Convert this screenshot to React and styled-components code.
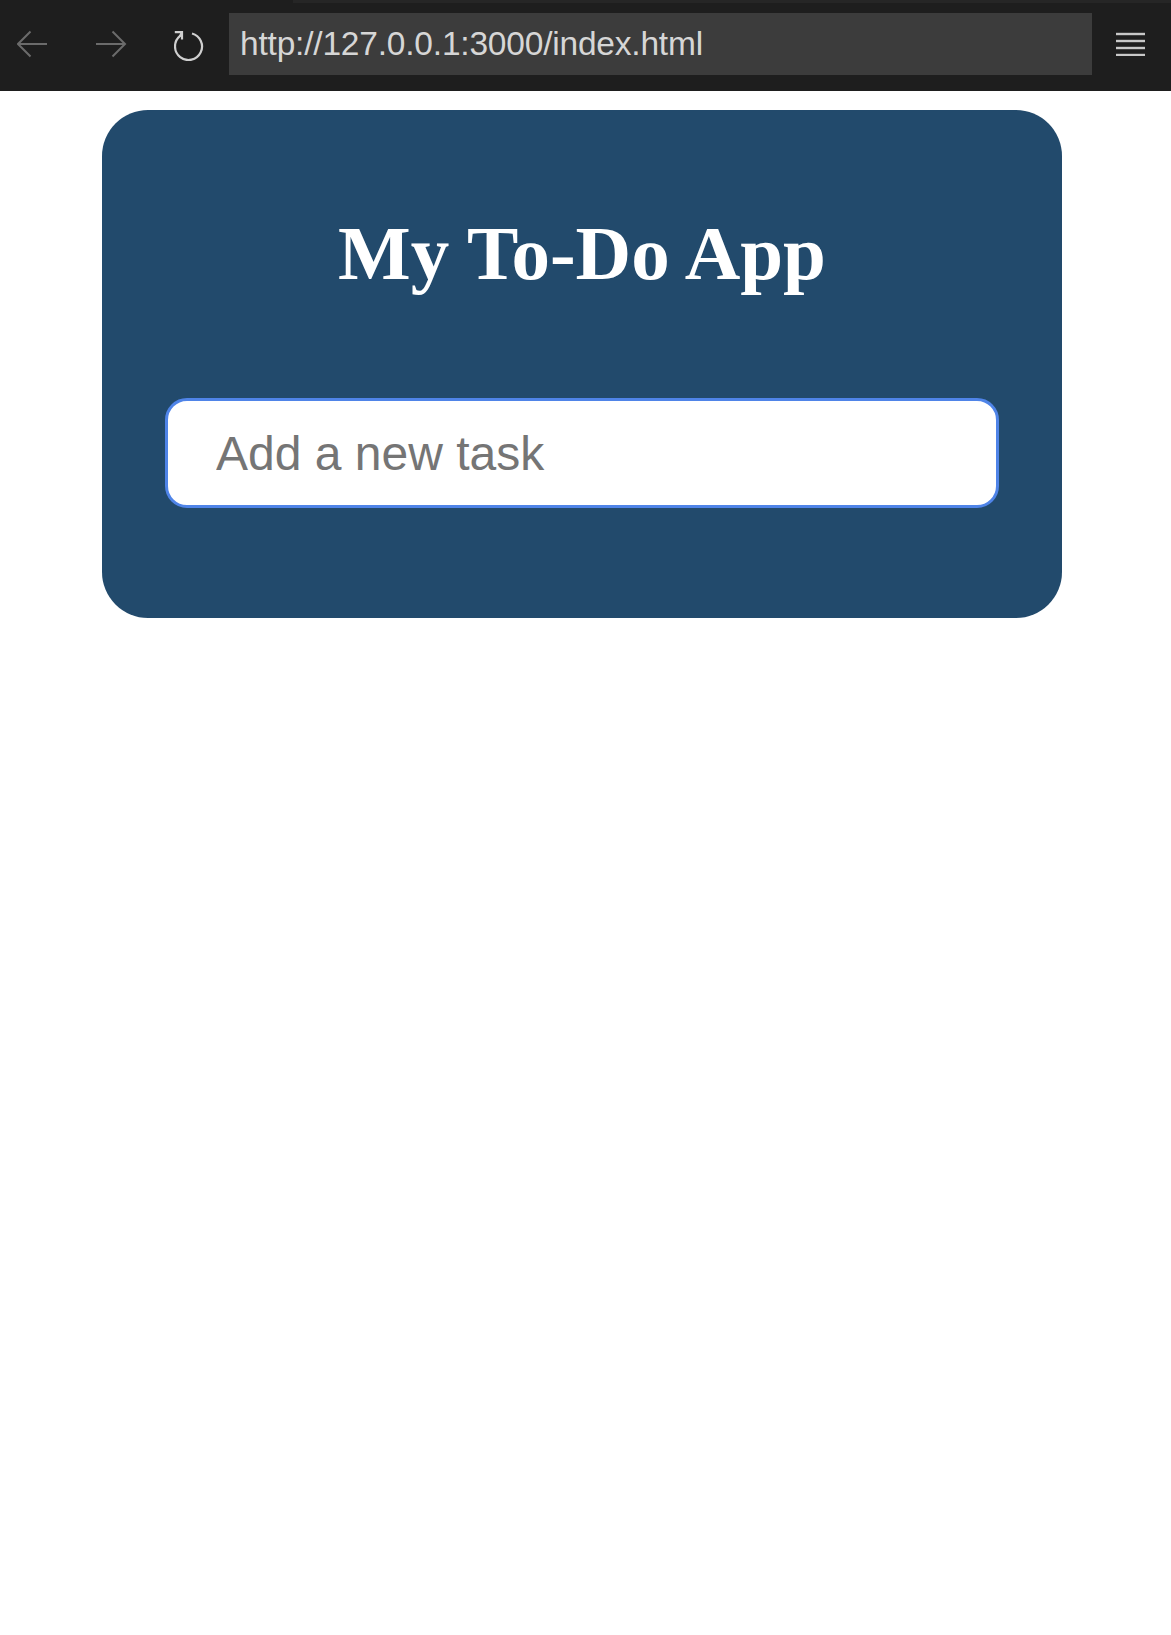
import React from 'react';
import styled, { createGlobalStyle } from 'styled-components';

const GlobalStyle = createGlobalStyle`
  body {
    margin: 0;
    background: #ffffff;
    font-family: "Liberation Sans", Arial, sans-serif;
  }
`;

const Toolbar = styled.header`
  height: 91px;
  display: flex;
  align-items: center;
  padding-left: 17px;
  box-sizing: border-box;
  background:
    linear-gradient(#262626, #262626) 293px 0 / 100% 3px no-repeat,
    #1e1e1e;
`;

const ToolIcon = styled.svg`
  flex: none;
  display: block;
  margin-right: ${props => props.$mr}px;
  margin-top: ${props => props.$mt || 0}px;
`;

const UrlField = styled.div`
  flex: none;
  width: 863px;
  height: 62px;
  margin: -3px 24px 0 0;
  padding-left: 11px;
  box-sizing: border-box;
  display: flex;
  align-items: center;
  background: #3c3c3c;
  color: #d6d6d6;
  font-size: 33.5px;
  letter-spacing: -0.2px;
`;

const Main = styled.main`
  padding: 19px 0 0 102px;
`;

const Card = styled.section`
  width: 960px;
  box-sizing: border-box;
  padding: 100px 63px 110px;
  border-radius: 46px;
  background: #224a6c;
`;

const Title = styled.h1`
  margin: 0 0 102px;
  text-align: center;
  color: #ffffff;
  font-family: "Liberation Serif", "Times New Roman", serif;
  font-weight: 700;
  font-size: 77px;
  line-height: 86px;
`;

const TaskInput = styled.input`
  display: block;
  width: 100%;
  height: 110px;
  box-sizing: border-box;
  margin: 0;
  padding: 0 48px;
  border: 3px solid #4f84e8;
  border-radius: 22px;
  outline: none;
  background: #ffffff;
  color: #222;
  font-family: "Liberation Sans", Arial, sans-serif;
  font-size: 48px;

  &::placeholder {
    color: #757575;
  }
`;

const BackIcon = () =>
  <ToolIcon width="31" height="28" viewBox="0 0 31 28" $mr={48} $mt={-4}>
    <path d="M1 14 H30 M13.5 1.5 L1 14 L13.5 26.5" fill="none" stroke="#6b6b6b" strokeWidth="2" />
  </ToolIcon>

const ForwardIcon = () =>
  <ToolIcon width="31" height="28" viewBox="0 0 31 28" $mr={47} $mt={-4}>
    <path d="M0 14 H29 M16.5 1.5 L29 14 L16.5 26.5" fill="none" stroke="#6b6b6b" strokeWidth="2" />
  </ToolIcon>

const ReloadIcon = () =>
  <ToolIcon width="30" height="31" viewBox="0 0 30 31" $mr={25} $mt={-1}>
    <path
      d="M18 3.46 A13.5 13.5 0 1 1 5.8 6.2 L8 2.2 M0.8 2.2 H8 V9.5"
      fill="none"
      stroke="#cfcfcf"
      strokeWidth="2.2"
    />
  </ToolIcon>

const MenuIcon = () =>
  <ToolIcon width="29" height="24" viewBox="0 0 29 24" $mr={0} $mt={-3}>
    {[2, 9, 16, 23].map(y =>
      <rect key={y} x="0" y={y - 1.2} width="29" height="2.4" fill="#c8c8c8" />
    )}
  </ToolIcon>

const App = () =>
  <>
    <GlobalStyle />
    <Toolbar>
      <BackIcon />
      <ForwardIcon />
      <ReloadIcon />
      <UrlField>http://127.0.0.1:3000/index.html</UrlField>
      <MenuIcon />
    </Toolbar>
    <Main>
      <Card>
        <Title>My To-Do App</Title>
        <TaskInput type="text" placeholder="Add a new task" />
      </Card>
    </Main>
  </>

export default App;
